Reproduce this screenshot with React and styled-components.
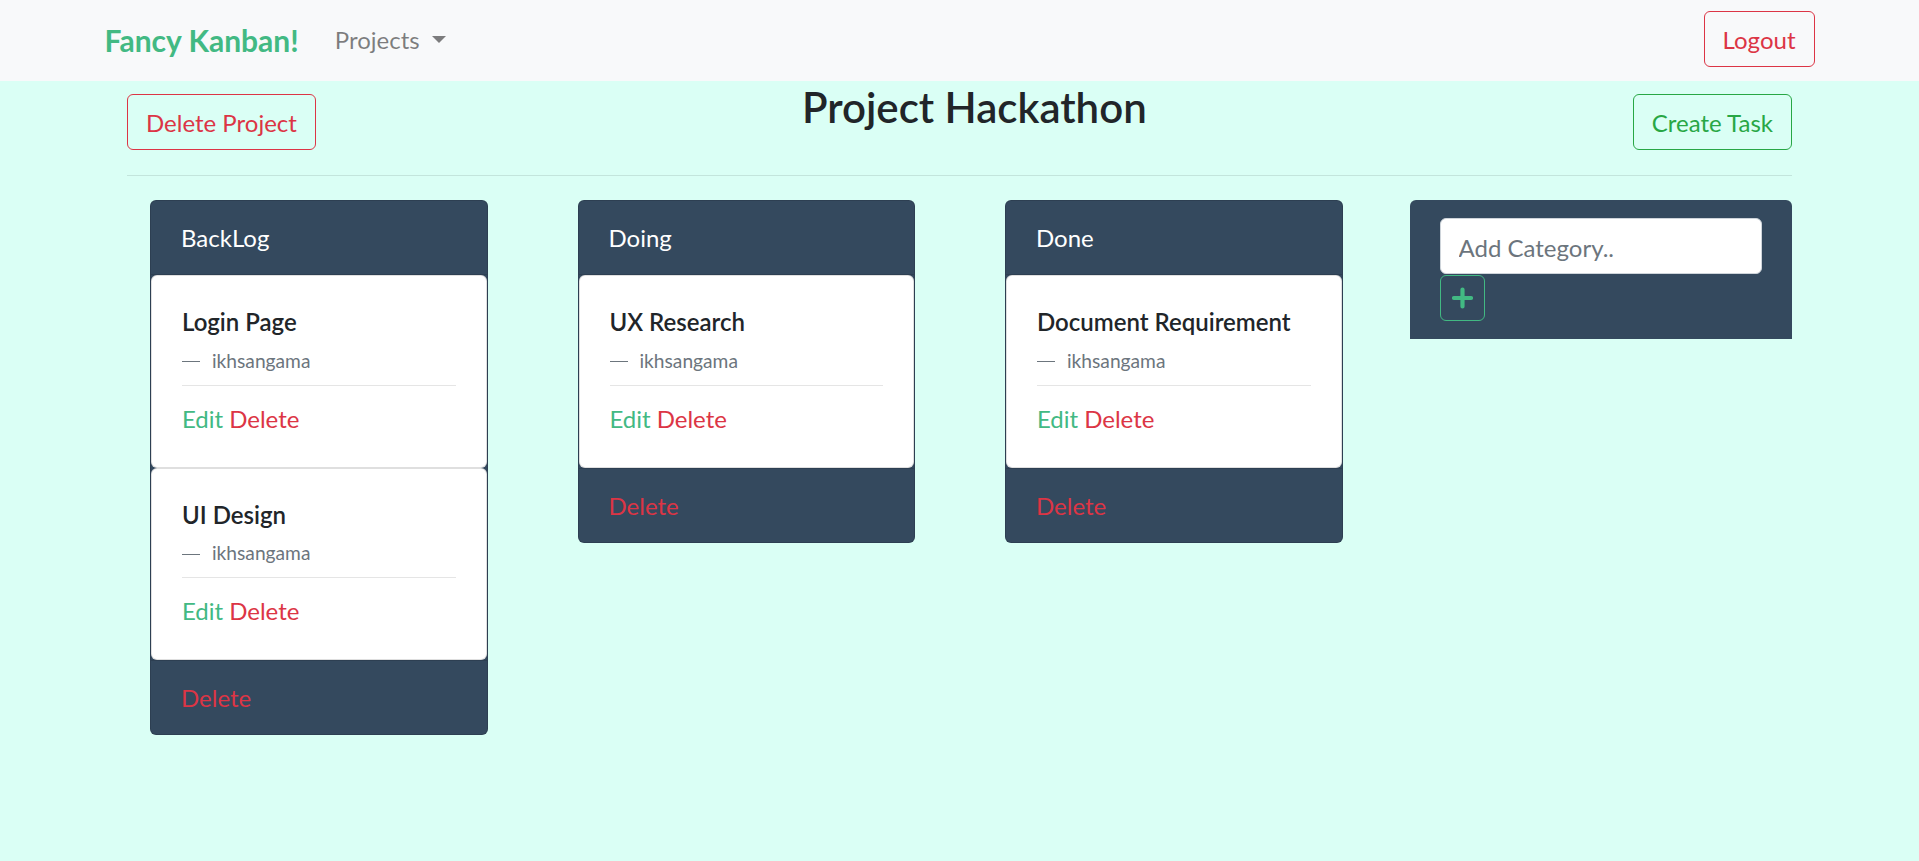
import React from "react";
import styled, { createGlobalStyle } from "styled-components";

const GREEN = "#42b983";
const RED = "#dc3545";

const GlobalStyle = createGlobalStyle`
  *, *::before, *::after { box-sizing: border-box; }
  html, body { margin: 0; padding: 0; background: #dafff5; }
  body {
    font-family: Lato, "Noto Sans", sans-serif;
    font-size: 24px;
    line-height: 1.5;
    color: #212529;
    min-height: 100vh;
  }
`;

const Navbar = styled.nav`
  background: #f8f9fa;
  padding: 11px 0 14px;
`;

const NavInner = styled.div`
  width: 1710px;
  margin: 0 auto;
  height: 56px;
  display: flex;
  align-items: center;
`;

const Brand = styled.a`
  font-size: 30px;
  font-weight: 700;
  color: ${GREEN};
  line-height: 45px;
  padding-top: 3px;
  margin-right: 24px;
  text-decoration: none;
`;

const NavDropdown = styled.a`
  font-size: 24px;
  line-height: 36px;
  padding: 1px 12px 0;
  color: rgba(0, 0, 0, 0.5);
  display: flex;
  align-items: center;
  &::after {
    content: "";
    display: inline-block;
    margin-left: 0.5em;
    border-top: 0.3em solid;
    border-right: 0.3em solid transparent;
    border-left: 0.3em solid transparent;
  }
`;

const OutlineButton = styled.button`
  font-family: inherit;
  font-size: 24px;
  line-height: 36px;
  padding: 10px 18px 8px;
  border: 1px solid ${(p) => p.$color};
  color: ${(p) => p.$color};
  background: transparent;
  border-radius: 6px;
  margin-left: ${(p) => (p.$pushRight ? "auto" : "0")};
  cursor: pointer;
`;

const Container = styled.main`
  width: 1665px;
  margin: 0 auto;
`;

const Toolbar = styled.div`
  display: flex;
  justify-content: space-between;
  align-items: flex-start;
  padding-top: 13px;
`;

const Title = styled.h3`
  margin: -12px 0 0;
  font-size: 42px;
  font-weight: 600;
  line-height: 1.2;
  color: #212529;
`;

const Divider = styled.hr`
  border: 0;
  border-top: 1px solid rgba(0, 0, 0, 0.1);
  margin: 25px 0 24px;
`;

const Board = styled.div`
  display: grid;
  grid-template-columns: repeat(4, 1fr);
  column-gap: 45px;
  align-items: start;
`;

const Column = styled.section`
  margin: 0 22px 0 23px;
  background: #34495e;
  border: 1px solid rgba(0, 0, 0, 0.125);
  border-radius: 6px;
  overflow: hidden;
`;

const ColumnHeader = styled.div`
  padding: 19px 30px 18px;
  line-height: 36px;
  color: #fff;
  border-bottom: 1px solid rgba(0, 0, 0, 0.125);
`;

const ColumnFooter = styled.div`
  padding: 19px 30px 18px;
  line-height: 36px;
  color: ${RED};
  border-top: 1px solid rgba(0, 0, 0, 0.125);
`;

const TaskCard = styled.article`
  background: #fff;
  border: 1px solid rgba(0, 0, 0, 0.125);
  border-radius: 6px;
  padding: 32px 30px 30px;
`;

const TaskTitle = styled.h6`
  margin: 0 0 10px;
  font-size: 24px;
  font-weight: 600;
  line-height: 28.8px;
  color: #212529;
`;

const TaskAuthor = styled.footer`
  font-size: 19.2px;
  line-height: 28.8px;
  color: #6c757d;
  margin-bottom: 9px;
  display: flex;
  align-items: center;
  &::before {
    content: "";
    width: 18px;
    height: 1px;
    background: #6c757d;
    margin-right: 12px;
    margin-top: 1px;
  }
`;

const CardRule = styled.hr`
  border: 0;
  border-top: 1px solid rgba(0, 0, 0, 0.1);
  margin: 0 0 15px;
`;

const CardActions = styled.div`
  line-height: 36px;
  display: flex;
  gap: 6px;
`;

const ActionLink = styled.a`
  color: ${(p) => p.$color};
  text-decoration: none;
  cursor: pointer;
`;

const AddCategoryPanel = styled.section`
  background: #34495e;
  border-radius: 6px 6px 0 0;
  padding: 18px 30px;
`;

const CategoryInput = styled.input`
  display: block;
  width: 100%;
  height: 56px;
  font-family: inherit;
  font-size: 24px;
  line-height: 36px;
  padding: 10px 18px 8px;
  border: 1px solid #ced4da;
  border-radius: 6px;
  color: #495057;
  background: #fff;
  outline: none;
  &::placeholder {
    color: #6c757d;
  }
`;

const PlusButton = styled.button`
  width: 45px;
  height: 46px;
  padding: 0;
  margin-top: 1px;
  border: 1px solid ${GREEN};
  border-radius: 6px;
  background: transparent;
  display: flex;
  align-items: center;
  justify-content: center;
  cursor: pointer;
`;

const PlusIcon = () => (
  <svg width="21" height="22" viewBox="0 0 21 22" aria-hidden="true">
    <path
      d="M10.5 2.5V19.5M2 11H19"
      stroke={GREEN}
      strokeWidth="4.2"
      strokeLinecap="round"
      fill="none"
    />
  </svg>
);

const columns = [
  {
    name: "BackLog",
    tasks: [
      { title: "Login Page", author: "ikhsangama" },
      { title: "UI Design", author: "ikhsangama" },
    ],
  },
  { name: "Doing", tasks: [{ title: "UX Research", author: "ikhsangama" }] },
  {
    name: "Done",
    tasks: [{ title: "Document Requirement", author: "ikhsangama" }],
  },
];

export default function App() {
  return (
    <>
      <GlobalStyle />
      <Navbar>
        <NavInner>
          <Brand>Fancy Kanban!</Brand>
          <NavDropdown>Projects</NavDropdown>
          <OutlineButton $color={RED} $pushRight>
            Logout
          </OutlineButton>
        </NavInner>
      </Navbar>
      <Container>
        <Toolbar>
          <OutlineButton $color={RED}>Delete Project</OutlineButton>
          <Title>Project Hackathon</Title>
          <OutlineButton $color="#28a745">Create Task</OutlineButton>
        </Toolbar>
        <Divider />
        <Board>
          {columns.map((col) => (
            <Column key={col.name}>
              <ColumnHeader>{col.name}</ColumnHeader>
              {col.tasks.map((t) => (
                <TaskCard key={t.title}>
                  <TaskTitle>{t.title}</TaskTitle>
                  <TaskAuthor>{t.author}</TaskAuthor>
                  <CardRule />
                  <CardActions>
                    <ActionLink $color={GREEN}>Edit</ActionLink>
                    <ActionLink $color={RED}>Delete</ActionLink>
                  </CardActions>
                </TaskCard>
              ))}
              <ColumnFooter>Delete</ColumnFooter>
            </Column>
          ))}
          <AddCategoryPanel>
            <CategoryInput placeholder="Add Category.." />
            <PlusButton>
              <PlusIcon />
            </PlusButton>
          </AddCategoryPanel>
        </Board>
      </Container>
    </>
  );
}
